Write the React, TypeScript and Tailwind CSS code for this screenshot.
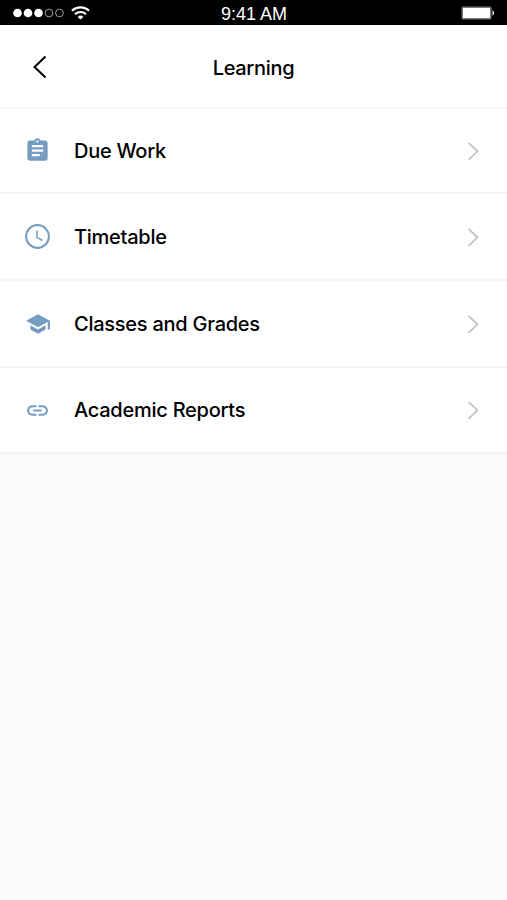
import type { ReactNode } from "react";

const menuItems: { label: string; icon: ReactNode }[] = [
  {
    label: "Due Work",
    icon: (
      <svg className="size-[27px]" viewBox="0 0 24 24" fill="currentColor">
        <path d="M19 3h-4.180C14.400 1.840 13.300 1 12 1c-1.300 0-2.400.840-2.820 2H5c-1.100 0-2 .900-2 2v14c0 1.100.900 2 2 2h14c1.100 0 2-.900 2-2V5c0-1.100-.900-2-2-2zm-7 0c.550 0 1 .450 1 1s-.450 1-1 1-1-.450-1-1 .450-1 1-1zm2 14H7v-2h7v2zm3-4H7v-2h10v2zm0-4H7V7h10v2z" />
      </svg>
    ),
  },
  {
    label: "Timetable",
    icon: (
      <svg
        className="size-[27px]"
        viewBox="0 0 27 27"
        fill="none"
        stroke="currentColor"
      >
        <circle cx="13.5" cy="13.5" r="11.4" strokeWidth="2" />
        <path d="M13 7.5v6.800l5.500 3.200" strokeWidth="1.5" />
      </svg>
    ),
  },
  {
    label: "Classes and Grades",
    icon: (
      <svg className="size-[26px]" viewBox="0 0 24 24" fill="currentColor">
        <path d="M5 13.180v4L12 21l7-3.820v-4L12 17l-7-3.820zM12 3L1 9l11 6 9-4.910V17h2V9L12 3z" />
      </svg>
    ),
  },
  {
    label: "Academic Reports",
    icon: (
      <svg className="size-[25px]" viewBox="0 0 24 24" fill="currentColor">
        <path d="M3.900 12c0-1.710 1.390-3.100 3.100-3.100h4V7H7c-2.760 0-5 2.240-5 5s2.240 5 5 5h4v-1.900H7c-1.710 0-3.100-1.390-3.100-3.100zM8 13h8v-2H8v2zm9-6h-4v1.900h4c1.710 0 3.100 1.390 3.100 3.100s-1.390 3.100-3.100 3.100h-4V17h4c2.760 0 5-2.240 5-5s-2.240-5-5-5z" />
      </svg>
    ),
  },
];

const StatusBar = () => (
  <div className="grid h-[25px] grid-cols-3 items-center bg-black pl-[13px] pr-3 text-white">
    <div className="flex items-center gap-[7px]">
      <svg className="h-[10px] w-[51px]" viewBox="0 0 51 10" fill="none">
        <circle cx="4.5" cy="5" r="4.3" fill="white" />
        <circle cx="15" cy="5" r="4.3" fill="white" />
        <circle cx="25.5" cy="5" r="4.3" fill="white" />
        <circle cx="36" cy="5" r="3.9" stroke="#aaa" strokeWidth="0.9" />
        <circle cx="46.5" cy="5" r="3.9" stroke="#aaa" strokeWidth="0.9" />
      </svg>
      <svg
        className="h-[14px] w-[19px]"
        viewBox="0 0 19 14"
        fill="none"
        stroke="white"
        strokeWidth="2.2"
      >
        <path d="M1 4.800a12.200 12.200 0 0 1 17 0" />
        <path d="M4 8.200a8 8 0 0 1 11 0" />
        <path d="M9.500 13.500 6.700 10.900a4 4 0 0 1 5.600 0z" fill="white" stroke="none" />
      </svg>
    </div>
    <span className="pt-0.5 text-center font-['Liberation_Sans',sans-serif] text-lg leading-none">
      9:41 AM
    </span>
    <svg className="h-[14px] w-[34px] justify-self-end" viewBox="0 0 34 14">
      <rect x="0.5" y="0.5" width="30" height="13" rx="1.5" fill="#777" />
      <rect x="2" y="2" width="27" height="10" rx="0.5" fill="white" />
      <path d="M31.500 4.500c2 .5 2 4.500 0 5z" fill="white" />
    </svg>
  </div>
);

const App = () => {
  return (
    <div className="min-h-screen bg-[#f8fafc] font-['Inter',sans-serif] text-black">
      <StatusBar />

      {/* Header */}
      <header className="grid h-[84px] grid-cols-3 items-center border-b-2 border-[#f5f5f5] bg-white px-8 pt-0.5">
        <button aria-label="Back" className="w-4">
          <svg
            className="h-6 w-4"
            viewBox="0 0 16 24"
            fill="none"
            stroke="currentColor"
            strokeWidth="2"
          >
            <path d="M13.500 1.500 2.500 12l11 10.500" />
          </svg>
        </button>
        <h1 className="pt-0.5 text-center text-xl font-medium tracking-[-0.3px]">
          Learning
        </h1>
      </header>

      {/* Menu */}
      <nav aria-label="Learning">
        {menuItems.map((item) => (
          <a
            key={item.label}
            href="#"
            className="flex h-[86.75px] items-center border-b-2 border-[#f5f5f5] bg-white pl-6 pr-7 pt-px first:h-[85px] first:pt-0"
          >
            <span className="flex w-[27px] justify-center text-[#759dc2]">
              {item.icon}
            </span>
            <span className="ml-[23px] flex-1 text-xl font-medium tracking-[-0.25px]">
              {item.label}
            </span>
            <svg
              className="h-5 w-3"
              viewBox="0 0 12 20"
              fill="none"
              stroke="#c0c0c0"
              strokeWidth="1.7"
            >
              <path d="m1.500 1.800 9 8.500-9 8.500" />
            </svg>
          </a>
        ))}
      </nav>
    </div>
  );
};

export default App;
